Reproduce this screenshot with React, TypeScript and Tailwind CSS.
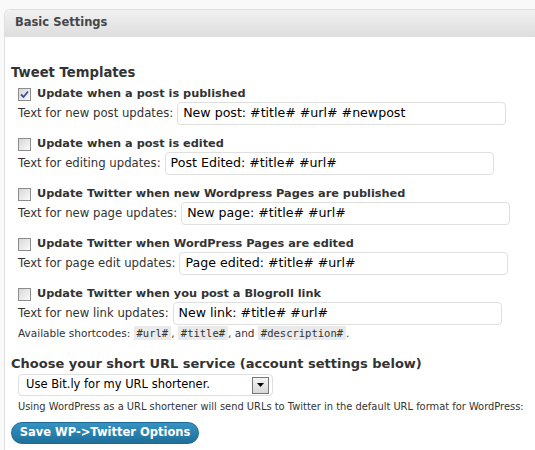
import React from "react";

const font = { fontFamily: '"DejaVu Sans", Verdana, sans-serif' };

type Row = { label: string; text: string; value: string; checked?: boolean };

const rows: Row[] = [
  { label: "Update when a post is published", text: "Text for new post updates:", value: "New post: #title# #url# #newpost", checked: true },
  { label: "Update when a post is edited", text: "Text for editing updates:", value: "Post Edited: #title# #url#" },
  { label: "Update Twitter when new Wordpress Pages are published", text: "Text for new page updates:", value: "New page: #title# #url#" },
  { label: "Update Twitter when WordPress Pages are edited", text: "Text for page edit updates:", value: "Page edited: #title# #url#" },
  { label: "Update Twitter when you post a Blogroll link", text: "Text for new link updates:", value: "New link: #title# #url#" },
];

function Checkbox({ checked }: { checked?: boolean }) {
  return (
    <span className="flex h-[13px] w-[13px] items-center justify-center border border-[#8c8c8c] bg-gradient-to-br from-[#d6d6d6] to-[#fbfbfb]">
      {checked && (
        <svg width="9" height="9" viewBox="0 0 9 9">
          <path d="M1 4.5 L3.5 7 L8 1.5" stroke="#3b4fa0" strokeWidth="1.8" fill="none" />
        </svg>
      )}
    </span>
  );
}

function Code({ children }: { children: React.ReactNode }) {
  return (
    <code className="bg-[#eaeaea] px-[3px] py-[1px] text-[10.5px]" style={{ fontFamily: '"DejaVu Sans Mono", monospace' }}>
      {children}
    </code>
  );
}

export default function App() {
  return (
    <div className="h-[450px] w-[535px] overflow-hidden bg-[#f9f9f9] pl-[4px] pt-[9px] text-[#333]" style={font}>
      <div className="h-full rounded-tl-[6px] border-l border-t border-[#dfdfdf] bg-white">
        <div className="flex h-[27px] items-center rounded-tl-[6px] border-b border-[#dfdfdf] bg-gradient-to-b from-[#f1f1f1] to-[#dedede] pl-[10px] text-[11.5px] font-bold text-[#464646]">
          Basic Settings
        </div>

        <div className="pl-[6px]">
          <h3 className="mb-[4px] mt-[27px] text-[13.2px] font-bold leading-[18px]">Tweet Templates</h3>

          {rows.map((r) => (
            <div key={r.label} className="mb-[11px] pl-[7px]">
              <div className="flex h-[16px] items-center gap-[6px] text-[11.3px] font-bold">
                <Checkbox checked={r.checked} />
                <span>{r.label}</span>
              </div>
              <div className="flex items-center gap-[4px]">
                <span className="text-[11.7px]">{r.text}</span>
                <div className="flex h-[23px] w-[329px] items-center rounded-[4px] border border-[#dfdfdf] px-[5px] text-[12.6px] text-black">
                  {r.value}
                </div>
              </div>
            </div>
          ))}

          <p className="-mt-[11px] pl-[7px] text-[10.5px] leading-[17px]">
            Available shortcodes: <Code>#url#</Code>, <Code>#title#</Code>, and <Code>#description#</Code>.
          </p>

          <h3 className="mt-[13px] text-[13px] font-bold leading-[18px]">Choose your short URL service (account settings below)</h3>

          <div className="mt-[1px] pl-[7px]">
            <div className="flex h-[22px] w-[255px] items-center justify-between rounded-[4px] border border-[#dfdfdf] pl-[7px] pr-[3px] text-[11.5px] text-black">
              <span>Use Bit.ly for my URL shortener.</span>
              <span className="flex h-[17px] w-[17px] items-center justify-center border border-[#777] bg-gradient-to-b from-[#f4f4f4] to-[#d8d8d8]">
                <svg width="7" height="4" viewBox="0 0 7 4">
                  <path d="M0 0 H7 L3.5 4 Z" fill="#000" />
                </svg>
              </span>
            </div>
            <p className="mt-[3px] whitespace-nowrap text-[9.9px] leading-[16px]">
              Using WordPress as a URL shortener will send URLs to Twitter in the default URL format for WordPress:
            </p>
          </div>

          <button className="mt-[7px] flex h-[22px] w-[188px] items-center justify-center rounded-full border border-[#1d6b94] bg-gradient-to-b from-[#3593c4] to-[#1f6f99] text-[11.5px] font-bold text-white">
            Save WP-&gt;Twitter Options
          </button>
        </div>
      </div>
    </div>
  );
}
